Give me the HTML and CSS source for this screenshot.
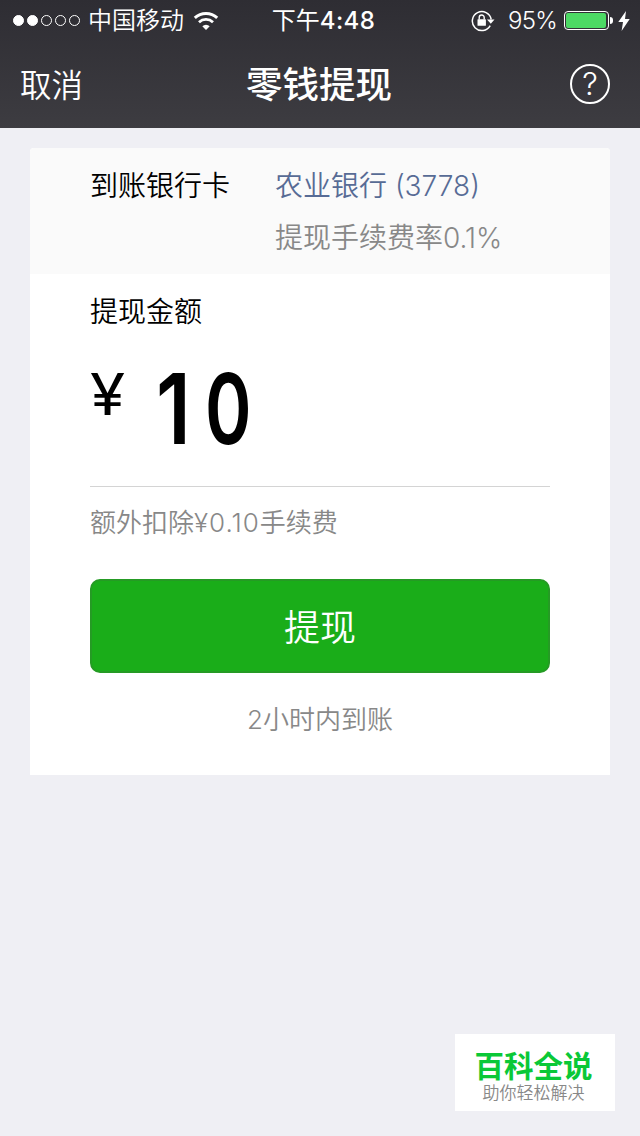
FILE: index.html
```
<!DOCTYPE html>
<html lang="zh-CN">
<head>
    <meta charset="UTF-8">
    <title>零钱提现</title>
    <link rel="stylesheet" href="styles.css">
</head>
<body>
    <header class="header">
        <div class="status-bar">
            <div class="status-left">
                <div class="signal">
                    <i class="dot full"></i>
                    <i class="dot full"></i>
                    <i class="dot"></i>
                    <i class="dot"></i>
                    <i class="dot"></i>
                </div>
                <span class="carrier">中国移动</span>
                <svg class="wifi" width="26" height="20" viewBox="0 0 26 20">
                    <path d="M1.8 6.8 A16.5 16.5 0 0 1 24.2 6.8" fill="none" stroke="#fff" stroke-width="3"/>
                    <path d="M6 11.2 A10.3 10.3 0 0 1 20 11.2" fill="none" stroke="#fff" stroke-width="2.8"/>
                    <path d="M9.3 15.2 A5.3 5.3 0 0 1 16.7 15.2 L13 19 Z" fill="#fff"/>
                </svg>
            </div>
            <span class="time">下午<b>4:48</b></span>
            <div class="status-right">
                <svg class="lock" width="24" height="22" viewBox="0 0 24 22">
                    <path d="M19.2 15.6 A9.5 9.5 0 1 1 20.2 9.5" fill="none" stroke="#fff" stroke-width="1.5"/>
                    <path d="M16 9.5 H23.5 L19.8 13.8 Z" fill="#fff"/>
                    <rect x="6.5" y="9.2" width="8.4" height="6.6" rx=".6" fill="#fff"/>
                    <path d="M8.2 9.5 V7.5 A2.5 2.5 0 0 1 13.2 7.5 V9.5" fill="none" stroke="#fff" stroke-width="1.4"/>
                </svg>
                <span class="percent">95%</span>
                <div class="battery"><div class="level"></div></div>
                <i class="battery-tip"></i>
                <svg class="bolt" width="12" height="20" viewBox="0 0 12 20">
                    <path d="M8 0 L0.3 11 H5 L3.6 20 L11.7 8 H7 Z" fill="#fff"/>
                </svg>
            </div>
        </div>
        <nav class="nav">
            <a class="cancel">取消</a>
            <h1>零钱提现</h1>
            <a class="help">?</a>
        </nav>
    </header>

    <main class="card">
        <section class="bank">
            <span class="bank-label">到账银行卡</span>
            <div>
                <div class="bank-name">农业银行 (3778)</div>
                <div class="rate">提现手续费率0.1%</div>
            </div>
        </section>
        <section class="amount">
            <label class="amount-label">提现金额</label>
            <div class="amount-row">
                <span class="yen">¥</span>
                <div class="number"><span class="one">1</span><span class="zero">0</span></div>
            </div>
            <p class="fee">额外扣除<span class="latin">¥0.10</span>手续费</p>
        </section>
        <section class="action">
            <button class="submit">提现</button>
            <p class="hint">2小时内到账</p>
        </section>
    </main>

    <aside class="badge">
        <div class="badge-title">百科全说</div>
        <div class="badge-text">助你轻松解决</div>
    </aside>
</body>
</html>
```
FILE: styles.css
```
* {
    box-sizing: border-box;
}
body {
    margin: 0;
    height: 1136px;
    background: #efeff4;
    font-family: Inter, "Noto Sans CJK SC", sans-serif;
    font-weight: 350;
    overflow: hidden;
}
.header {
    height: 128px;
    background: linear-gradient(#2e2d33, #3d3c41);
    color: #fff;
}
.status-bar {
    display: grid;
    grid-template-columns: 1fr auto 1fr;
    align-items: center;
    height: 40px;
    padding: 0 10px 0 13px;
    font-size: 24px;
    line-height: 40px;
}
.status-left, .status-right, .signal {
    display: flex;
    align-items: center;
}
.signal {
    gap: 3px;
}
.dot {
    width: 11px;
    height: 11px;
    border: 1px solid #fff;
    border-radius: 50%;
}
.dot.full {
    background: #fff;
}
.carrier {
    margin-left: 8px;
    padding-top: 1px;
}
.wifi {
    margin-left: 9px;
}
.time {
    padding: 1px 0 0 4px;
    font-weight: 400;
}
.time b {
    font-weight: 500;
    letter-spacing: .4px;
}
.status-right {
    justify-content: flex-end;
}
.percent {
    margin: 0 7px 0 13px;
    padding-top: 1px;
    letter-spacing: -.7px;
}
.battery {
    width: 45px;
    height: 19px;
    padding: 1px;
    border: 1px solid #fff;
    border-radius: 4px;
}
.level {
    width: 40px;
    height: 15px;
    background: #4cd964;
    border-radius: 2px;
}
.battery-tip {
    width: 3px;
    height: 7px;
    margin-left: 1px;
    background: #fff;
    border-radius: 0 3px 3px 0;
}
.bolt {
    margin-left: 5px;
}
.nav {
    display: grid;
    grid-template-columns: 1fr auto 1fr;
    align-items: center;
    height: 88px;
    padding: 0 30px 0 20px;
}
.cancel {
    padding-bottom: 2px;
    font-size: 31.5px;
}
h1 {
    margin: 0;
    padding: 0 0 4px 8px;
    font-size: 36.5px;
    font-weight: 500;
}
.help {
    justify-self: end;
    width: 40px;
    height: 40px;
    border: 2px solid #fff;
    border-radius: 50%;
    font-size: 31px;
    line-height: 36px;
    text-align: center;
}
.card {
    width: 580px;
    height: 627px;
    margin: 20px auto 0;
    background: #fff;
    border-radius: 4px 4px 0 0;
}
.bank {
    display: flex;
    height: 126px;
    padding: 12px 60px 0;
    background: #fafafa;
    border-radius: 4px 4px 0 0;
    font-size: 28px;
    line-height: 52px;
}
.bank-label {
    width: 185px;
    color: #000;
}
.bank-name {
    color: #576b95;
}
.rate {
    color: #888;
}
.amount {
    height: 284px;
    padding: 18px 60px 0;
}
.amount-label {
    display: block;
    font-size: 28px;
    line-height: 40px;
}
.amount-row {
    display: flex;
    height: 155px;
    border-bottom: 1px solid #d4d4d4;
    padding-top: 28px;
}
.yen {
    width: 66px;
    font-size: 58px;
    font-weight: 400;
    line-height: 68px;
    transform: scaleX(1.1);
    transform-origin: left;
}
.number {
    display: flex;
    font-size: 98px;
    font-weight: 600;
    line-height: 97px;
}
.one, .zero {
    width: 49px;
    transform: scaleX(.84);
    transform-origin: left;
}
.zero {
    transform: scaleX(.72);
}
.fee {
    margin: 16px 0 0;
    color: #888;
    font-size: 26px;
    line-height: 40px;
}
.latin {
    letter-spacing: 1px;
}
.action {
    padding: 21px 60px 0;
    text-align: center;
}
.submit {
    display: block;
    width: 460px;
    height: 94px;
    padding: 0 0 3px;
    background: #1aad19;
    border: 2px solid #259b24;
    border-radius: 10px;
    color: #fff;
    font-family: inherit;
    font-size: 36px;
    font-weight: 350;
}
.hint {
    margin: 27px 0 0;
    color: #888;
    font-size: 26px;
    line-height: 40px;
}
.badge {
    position: absolute;
    left: 455px;
    top: 1034px;
    width: 160px;
    height: 77px;
    padding-top: 15px;
    background: #fff;
    text-align: center;
}
.badge-title {
    margin-left: -3px;
    color: #0ac837;
    font-size: 29.5px;
    font-weight: 600;
    line-height: 34px;
}
.badge-text {
    margin-left: -3px;
    color: #888;
    font-size: 17px;
    line-height: 21px;
}
```
